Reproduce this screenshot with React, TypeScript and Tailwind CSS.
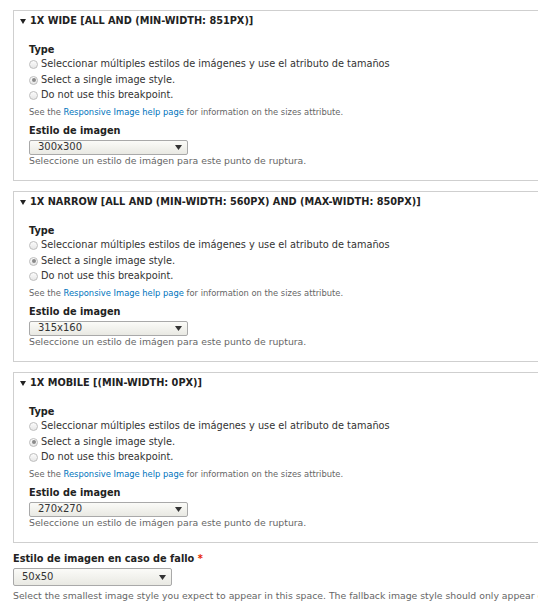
import React from 'react'

interface Breakpoint {
  title: string
  style: string
}

const breakpoints: Breakpoint[] = [
  { title: '1X WIDE [ALL AND (MIN-WIDTH: 851PX)]', style: '300x300' },
  { title: '1X NARROW [ALL AND (MIN-WIDTH: 560PX) AND (MAX-WIDTH: 850PX)]', style: '315x160' },
  { title: '1X MOBILE [(MIN-WIDTH: 0PX)]', style: '270x270' },
]

const options = [
  'Seleccionar múltiples estilos de imágenes y use el atributo de tamaños',
  'Select a single image style.',
  'Do not use this breakpoint.',
]

function Radio({ checked }: { checked?: boolean }) {
  return (
    <span className="w-[9px] h-[9px] rounded-full border border-[#bdbdbd] bg-gradient-to-b from-[#fcfcfc] to-[#e6e6e6] flex items-center justify-center shrink-0">
      {checked && <span className="w-[4px] h-[4px] rounded-full bg-[#8a8a8a]" />}
    </span>
  )
}

function Select({ value, tall }: { value: string; tall?: boolean }) {
  return (
    <div
      className={`w-[159px] ${tall ? 'h-[18px]' : 'h-[15px]'} border border-[#a9a9a9] rounded-[2px] bg-gradient-to-b from-[#fbfbf8] to-[#e9e9e3] flex items-center justify-between pl-[8px] pr-[5px] text-[10px] text-[#333]`}
    >
      <span className="leading-none">{value}</span>
      <svg width="7" height="5" viewBox="0 0 7 5">
        <polygon points="0,0 7,0 3.5,5" fill="#333" />
      </svg>
    </div>
  )
}

function Fieldset({ bp }: { bp: Breakpoint }) {
  return (
    <div className="w-[560px] h-[171px] border border-[#cfcfcf] pt-[4px] pl-[15px] flex flex-col">
      {/* Leyenda con triángulo */}
      <div className="-ml-[9px] flex items-center gap-[4px] h-[12px] leading-[12px] text-[9.75px] font-bold text-[#222] whitespace-nowrap">
        <svg width="6" height="5" viewBox="0 0 6 5" className="shrink-0">
          <polygon points="0,0 6,0 3,5" fill="#222" />
        </svg>
        <span>{bp.title}</span>
      </div>

      <p className="mt-[16.5px] h-[12px] leading-[12px] text-[9.75px] font-bold text-[#222]">Type</p>
      <div className="mt-[1.5px] flex flex-col">
        {options.map((o, i) => (
          <label key={o} className="h-[15.5px] flex items-center gap-[3px] text-[9.75px] text-[#333] whitespace-nowrap">
            <Radio checked={i === 1} />
            <span>{o}</span>
          </label>
        ))}
      </div>
      <p className="mt-[3px] h-[10px] leading-[10px] text-[8.35px] text-[#666] whitespace-nowrap">
        See the <span className="text-[#0074bd]">Responsive Image help page</span> for information on the sizes attribute.
      </p>

      <p className="mt-[8.5px] h-[12px] leading-[12px] text-[9.75px] font-bold text-[#222]">Estilo de imagen</p>
      <div className="mt-[2.5px]">
        <Select value={bp.style} />
      </div>
      <p className="mt-[1px] h-[10px] leading-[10px] text-[9.3px] text-[#666] whitespace-nowrap">
        Seleccione un estilo de imágen para este punto de ruptura.
      </p>
    </div>
  )
}

export default function App() {
  return (
    <div className="w-[538px] h-[606px] overflow-hidden bg-white font-['DejaVu_Sans',sans-serif]">
      <div className="pt-[10px] pl-[13px] flex flex-col gap-[10px]">
        {breakpoints.map((bp) => (
          <Fieldset key={bp.title} bp={bp} />
        ))}
      </div>

      {/* Estilo de respaldo */}
      <div className="pl-[13px] flex flex-col">
        <p className="mt-[10px] h-[12px] leading-[12px] text-[9.75px] font-bold text-[#222] whitespace-nowrap">
          Estilo de imagen en caso de fallo <span className="text-[#e62600]">*</span>
        </p>
        <div className="mt-[3px]">
          <Select value="50x50" tall />
        </div>
        <p className="mt-[5px] h-[10px] leading-[10px] text-[9.3px] text-[#666] whitespace-nowrap">
          Select the smallest image style you expect to appear in this space. The fallback image style should only appear on the site if an error occurs.
        </p>
      </div>
    </div>
  )
}
